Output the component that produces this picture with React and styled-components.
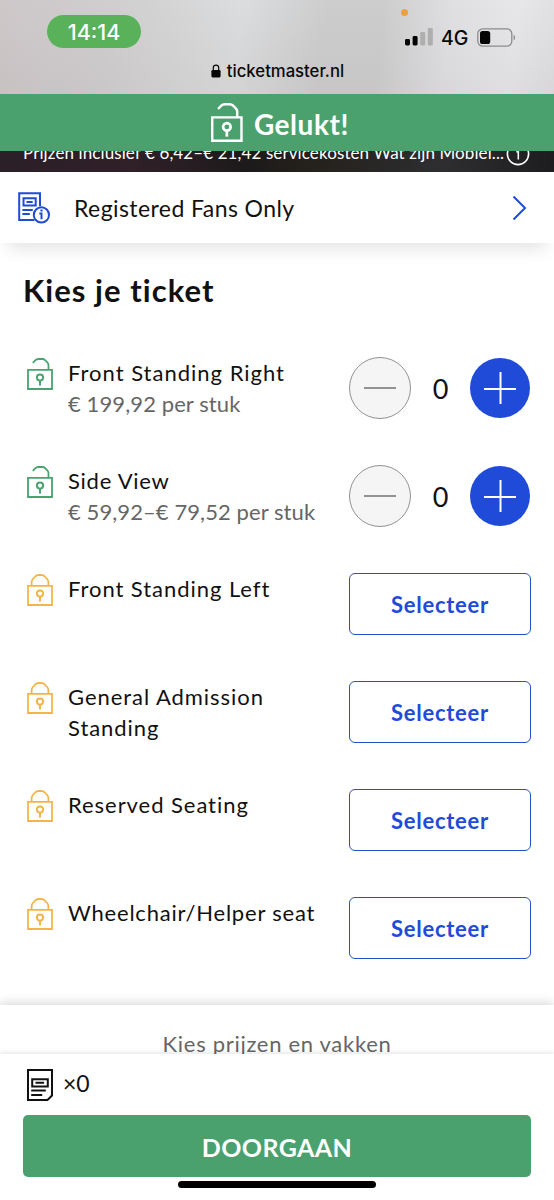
import React from "react";
import styled, { createGlobalStyle } from "styled-components";

//tickets shown in the list, in order
const tickets = [
  { name: "Front Standing Right", price: "€ 199,92 per stuk", open: true, nameGap: 1, priceGap: 0.1 },
  { name: "Side View", price: "€ 59,92–€ 79,52 per stuk", open: true, nameGap: 0.75, priceGap: 0.08 },
  { name: "Front Standing Left", nameGap: 0.95 },
  { name: "General Admission Standing", nameGap: 0.95 },
  { name: "Reserved Seating", nameGap: 0.95 },
  { name: "Wheelchair/Helper seat", nameGap: 0.8 },
];

const LockIcon = ({ open, color, size = 1, stroke = 1.8 }) => (
  <svg
    width={26 * size}
    height={32 * size}
    viewBox="0 0 26 32"
    fill="none"
    stroke={color}
    strokeWidth={stroke}
  >
    <path d="M1 11.8h24v19.2H1z" />
    {open ? (
      <path d="M5.8 4.9L8.2 2.4C9.3 1.2 10 1 11.4 1h4c1.2 0 1.8.3 2.7 1.2l2.4 2.4c.8.8 1 1.4 1 2.6v4.6" />
    ) : (
      <path d="M4.6 11.8V8.3c0-1.4.3-2.2 1.3-3.3l2.3-2.5C9.3 1.4 10 1 11.4 1h3.2c1.4 0 2.1.4 3.2 1.5l2.3 2.5c1 1.1 1.3 1.9 1.3 3.3v3.5" />
    )}
    <circle cx="13" cy="19.6" r="3.1" strokeWidth={stroke * 1.1} />
    <path d="M13 22.6v5" strokeWidth={stroke * 1.1} />
  </svg>
);

const InfoTicketIcon = () => (
  <svg width="32" height="32" viewBox="0 0 32 32" fill="none" stroke="#1f4bd8" strokeWidth="2">
    <path d="M16.5 28H1.2V1.2H22v13" />
    <path d="M5.5 6.2h12.2v7.4H5.5zM8.5 9.9h6.2M4.4 18h10.4M4.4 22h7.4" />
    <circle cx="23.4" cy="22.9" r="7.6" />
    <path d="M21.3 21.6h2.2v5.6M22.4 18.5h2.2" />
  </svg>
);

const TicketIcon = () => (
  <svg width="26" height="32" viewBox="0 0 26 32" fill="none" stroke="#111" strokeWidth="2">
    <path d="M1 1h24v25.5l-4.5 4.5H1z" />
    <path d="M5.2 10.2h15.6v7.2H5.2zM8.5 13.8h8.6M4.2 21.6h14.6M4.2 26h11" />
  </svg>
);

const App = () => {
  return (
    <>
      <GlobalStyle />
      <Phone>
        <StatusBar>
          <MicDot />
          <StatusRow>
            <Clock>14:14</Clock>
            <Signal>
              <svg width="28" height="18" viewBox="0 0 28 18">
                <rect x="0" y="11" width="5" height="6.5" rx="1.4" fill="#050505" />
                <rect x="7.6" y="8" width="5" height="9.5" rx="1.4" fill="#050505" />
                <rect x="15.2" y="4" width="5" height="13.5" rx="1.4" fill="#aeaeae" />
                <rect x="22.8" y="0" width="5" height="17.5" rx="1.4" fill="#aeaeae" />
              </svg>
              <span>4G</span>
              <svg width="39" height="19" viewBox="0 0 39 19">
                <rect x=".8" y=".8" width="34" height="17.4" rx="5" fill="none" stroke="#8c8c8e" strokeWidth="1.3" />
                <rect x="3" y="3" width="10.2" height="13" rx="2.6" fill="#050505" />
                <path d="M36.6 6.7c2 .8 2 4.8 0 5.6z" fill="#8c8c8e" />
              </svg>
            </Signal>
          </StatusRow>
          <Address>
            <svg width="10" height="14" viewBox="0 0 10 14">
              <path d="M2.3 7V3.8a2.7 2.7 0 0 1 5.4 0V7" fill="none" stroke="#080808" strokeWidth="1.2" />
              <rect x=".4" y="6" width="9.2" height="7.4" rx="1.3" fill="#080808" />
            </svg>
            <span>ticketmaster.nl</span>
          </Address>
        </StatusBar>
        <Banner>
          <LockIcon open color="#fff" size={1.22} stroke={2} />
          <span>Gelukt!</span>
        </Banner>
        <FeeStrip>
          <p>Prijzen inclusief € 6,42–€ 21,42 servicekosten Wat zijn Mobiel...</p>
          <svg width="24" height="24" viewBox="0 0 24 24" fill="none" stroke="#fff" strokeWidth="1.6">
            <circle cx="12" cy="12" r="10.6" />
            <path d="M10.3 9.7h2v7.7M11.2 6.5h2" />
          </svg>
        </FeeStrip>
        <FansRow>
          <InfoTicketIcon />
          <span>Registered Fans Only</span>
          <svg width="15" height="26" viewBox="0 0 15 26" fill="none" stroke="#1f4bd8" strokeWidth="2">
            <path d="M1.5 1.5 13 13 1.5 24.5" />
          </svg>
        </FansRow>
        <Main>
          <h1>Kies je ticket</h1>
          <TicketList>
            {tickets.map((ticket) => (
              <TicketRow key={ticket.name}>
                <LockSlot>
                  <LockIcon open={ticket.open} color={ticket.open ? "#47a46f" : "#f3b54a"} />
                </LockSlot>
                <TicketText>
                  <Label $gap={ticket.nameGap}>{ticket.name}</Label>
                  {ticket.price && (
                    <Label $muted $gap={ticket.priceGap}>
                      {ticket.price}
                    </Label>
                  )}
                </TicketText>
                {ticket.open ? (
                  <Stepper>
                    <MinusButton>
                      <svg width="32" height="32" stroke="#929292" strokeWidth="2">
                        <path d="M0 16h32" />
                      </svg>
                    </MinusButton>
                    <Amount>0</Amount>
                    <PlusButton>
                      <svg width="32" height="32" stroke="#fff" strokeWidth="2">
                        <path d="M0 17h32M16.5 0v32" />
                      </svg>
                    </PlusButton>
                  </Stepper>
                ) : (
                  <SelectButton>Selecteer</SelectButton>
                )}
              </TicketRow>
            ))}
          </TicketList>
        </Main>
        <PricePanel>Kies prijzen en vakken</PricePanel>
        <Footer>
          <Count>
            <TicketIcon />
            <span>×0</span>
          </Count>
          <ContinueButton>DOORGAAN</ContinueButton>
          <HomeBar />
        </Footer>
      </Phone>
    </>
  );
};

const GlobalStyle = createGlobalStyle`
  * {
    margin: 0;
    padding: 0;
    box-sizing: border-box;
  }
  body {
    background: white;
    font-family: "Lato", "Liberation Sans", sans-serif;
    color: #111;
  }
  button {
    font-family: inherit;
  }
  svg {
    display: block;
    flex: none;
  }
`;

const Phone = styled.div`
  width: 554px;
  height: 1200px;
  display: flex;
  flex-direction: column;
  overflow: hidden;
  background: white;
  white-space: nowrap;
`;

const StatusBar = styled.header`
  position: relative;
  height: 94px;
  flex: none;
  background:
    linear-gradient(180deg, rgba(255, 255, 255, 0.08), rgba(190, 180, 182, 0.16)),
    linear-gradient(97deg, #c9c3c4 0%, #cccacb 20%, #d8dadb 43%, #c9c9ca 58%, #c9c9ca 68%, #dddddf 80%, #e5e5e7 92%, #dcdcde 100%);
`;

const MicDot = styled.div`
  position: absolute;
  top: 9px;
  left: 401px;
  width: 7px;
  height: 7px;
  border-radius: 50%;
  background: #eea040;
`;

const StatusRow = styled.div`
  display: flex;
  justify-content: space-between;
  padding: 15px 38px 0 47px;
`;

const Clock = styled.div`
  width: 94px;
  height: 33px;
  border-radius: 17px;
  background: #59b259;
  color: white;
  font: 500 21.5px/34px "Inter", sans-serif;
  text-align: center;
`;

const Signal = styled.div`
  display: flex;
  align-items: center;
  padding-top: 11px;
  height: 33px;

  span {
    width: 27px;
    margin: 1px 9px 0 8px;
    font: 500 19.5px/24px "Inter", sans-serif;
    color: #080808;
  }
`;

const Address = styled.div`
  display: flex;
  align-items: center;
  justify-content: center;
  gap: 6px;
  padding: 12px 0 0 1px;

  span {
    font: 500 16.7px/22px "Inter", sans-serif;
    color: #080808;
  }
`;

const Banner = styled.div`
  height: 57px;
  flex: none;
  display: flex;
  align-items: center;
  justify-content: center;
  gap: 11px;
  padding-left: 6px;
  background: #4aa16d;
  color: white;
  font-size: 28px;
  font-weight: 700;

  span {
    padding-top: 2px;
    letter-spacing: 0.55px;
  }
`;

const FeeStrip = styled.div`
  height: 21px;
  flex: none;
  display: flex;
  justify-content: space-between;
  padding: 0 24px 0 23px;
  overflow: hidden;
  background: linear-gradient(90deg, #2b1f28 0%, #302028 24%, #1c1a1b 45%, #24201b 55%, #2e2e31 80%, #1d1d20 100%);
  color: white;

  p {
    margin-top: -9px;
    font-size: 17px;
    line-height: 22px;
    letter-spacing: 0.1px;
  }
  svg {
    margin-top: -9px;
  }
`;

const FansRow = styled.div`
  position: relative;
  height: 71px;
  flex: none;
  display: flex;
  align-items: center;
  padding: 0 27px 0 18px;
  background: white;
  box-shadow: 0 14px 16px -8px rgba(0, 0, 0, 0.11);

  span {
    flex: 1;
    padding-left: 24px;
    font-size: 23px;
    letter-spacing: 0.42px;
  }
`;

const Main = styled.main`
  height: 762px;
  flex: none;

  h1 {
    height: 91px;
    padding: 28px 23px 0;
    font-size: 31px;
    line-height: 38px;
    letter-spacing: 1.05px;
  }
`;

const TicketList = styled.ul`
  list-style: none;
`;

const TicketRow = styled.li`
  height: 108px;
  display: grid;
  grid-template-columns: 26px 296px 182px;
  padding: 23px 23px 0 27px;
`;

const LockSlot = styled.div`
  padding-top: 1px;
`;

const TicketText = styled.div`
  padding: 0 25px 0 15px;
  white-space: normal;
`;

const Label = styled.p`
  font-size: 22px;
  line-height: 31.4px;
  letter-spacing: ${(props) => props.$gap}px;
  color: ${(props) => (props.$muted ? "#666" : "#111")};
`;

const Stepper = styled.div`
  display: flex;
  align-items: center;
  justify-content: space-between;
  height: 62px;
  padding-right: 1px;
`;

const RoundButton = styled.button`
  display: grid;
  place-items: center;
  border-radius: 50%;
`;

const MinusButton = styled(RoundButton)`
  width: 62px;
  height: 62px;
  border: 1px solid #929292;
  background: #f5f5f5;
`;

const PlusButton = styled(RoundButton)`
  width: 60px;
  height: 60px;
  border: 0;
  background: #1f4bd8;
`;

const Amount = styled.span`
  font-size: 27px;
`;

const SelectButton = styled.button`
  width: 182px;
  height: 62px;
  border: 1.5px solid #2a4fc8;
  border-radius: 6px;
  background: white;
  color: #1f4bd8;
  font-size: 22px;
  font-weight: 700;
  letter-spacing: 0.75px;
`;

const PricePanel = styled.section`
  height: 49px;
  flex: none;
  padding-top: 23px;
  text-align: center;
  background: white;
  box-shadow: 0 -2px 10px rgba(0, 0, 0, 0.16);
  color: #666;
  font-size: 22px;
  line-height: 31px;
  letter-spacing: 0.7px;
`;

const Footer = styled.footer`
  position: relative;
  flex: 1;
  padding: 15px 23px 0;
  background: white;
  box-shadow: 0 -1px 5px rgba(0, 0, 0, 0.12);
`;

const Count = styled.div`
  display: flex;
  align-items: center;
  gap: 10px;
  height: 32px;
  padding-left: 4px;
  font-size: 23px;

  span {
    padding-bottom: 4px;
  }
`;

const ContinueButton = styled.button`
  display: block;
  width: 508px;
  height: 62px;
  margin-top: 14px;
  padding-top: 2px;
  border: 0;
  border-radius: 5px;
  background: #4aa16d;
  color: white;
  font-size: 25px;
  font-weight: 700;
  letter-spacing: 0.4px;
`;

const HomeBar = styled.div`
  width: 198px;
  height: 7px;
  margin: 4px auto 0;
  border-radius: 4px;
  background: black;
`;

export default App;
